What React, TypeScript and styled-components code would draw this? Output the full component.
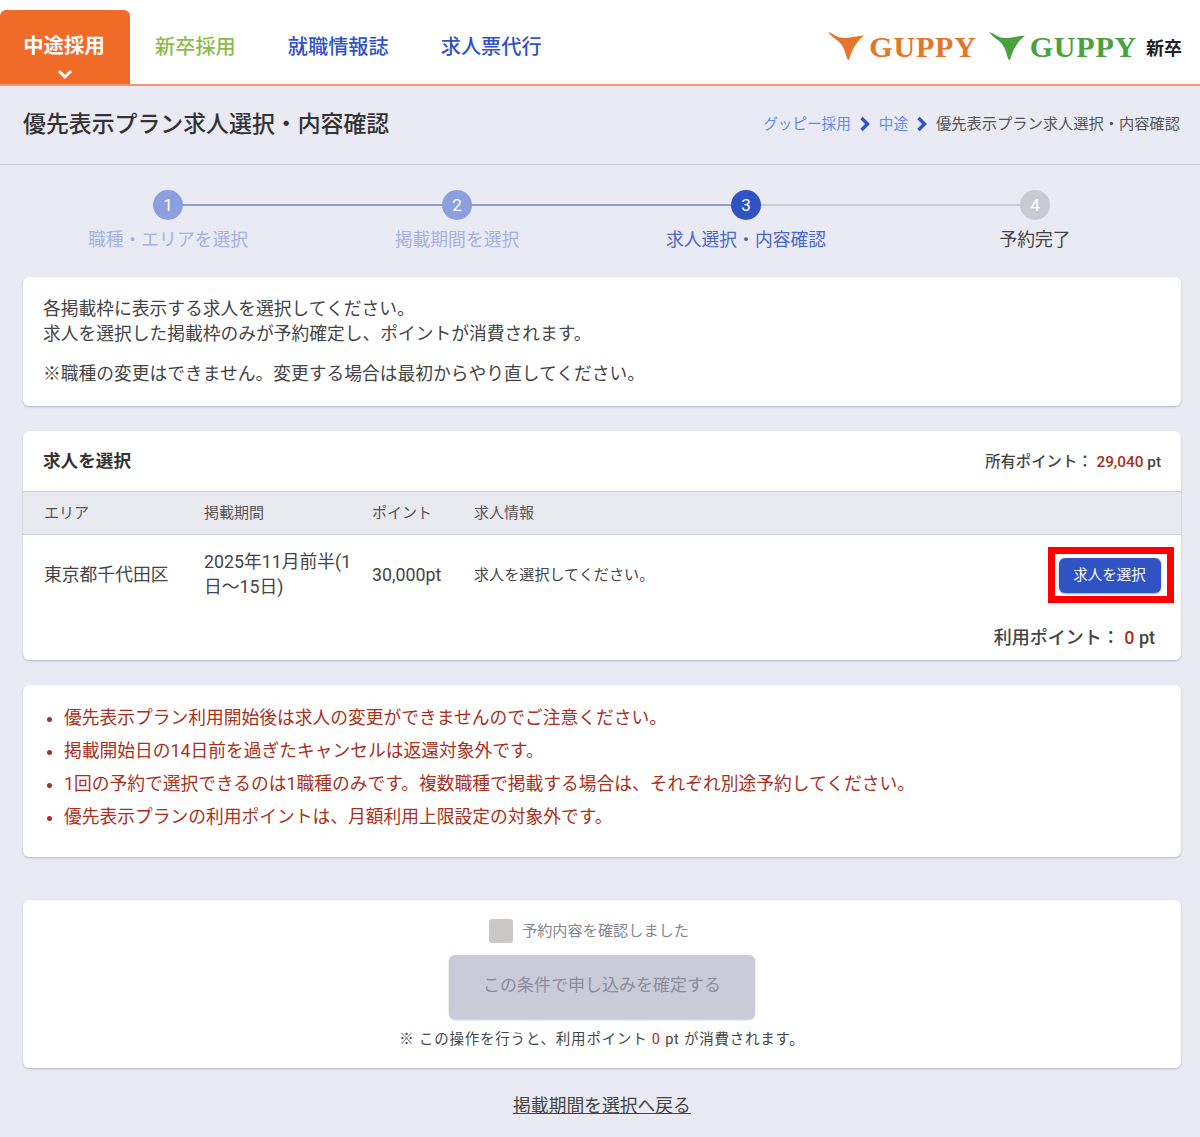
import React from 'react'
import styled, { createGlobalStyle } from 'styled-components'

const GlobalStyle = createGlobalStyle`
  html, body {
    margin: 0;
    padding: 0;
    background: #e9eaf3;
    color: #333;
    font-family: Roboto, "Noto Sans CJK JP", sans-serif;
  }
  * {
    box-sizing: border-box;
  }
`

const colors = {
  orange: '#f06a28',
  green: '#8bbb4c',
  blue: '#3053c4',
  red: '#a8301c',
  faded: '#8c9fdf'
}

const Header = styled.header`
  display: flex;
  align-items: flex-end;
  justify-content: space-between;
  height: 86px;
  background: #fff;
  border-bottom: 2px solid #f49470;
`

const Tabs = styled.nav`
  display: flex;
  align-items: flex-end;
  height: 74px;
`

const Tab = styled.a<{ $color: string }>`
  display: block;
  align-self: center;
  margin-right: 52px;
  font-size: 20.2px;
  font-weight: 500;
  line-height: 28px;
  color: ${p => p.$color};
`

const ActiveTab = styled.a`
  position: relative;
  display: block;
  width: 130px;
  height: 74px;
  margin-right: 25px;
  padding: 22px 2px 0 0;
  border-radius: 6px 6px 0 0;
  background: ${colors.orange};
  color: #fff;
  font-size: 20.4px;
  font-weight: 700;
  line-height: 28px;
  text-align: center;
`

const TabCaret = styled.svg`
  position: absolute;
  left: 57px;
  bottom: 4px;
  display: block;
`

const Logos = styled.div`
  display: flex;
  align-items: flex-start;
  align-self: flex-start;
  gap: 12px;
  margin: 32px 18px 0 0;
`

const Logo = styled.div`
  display: flex;
  align-items: flex-start;
  gap: 5px;
`

const LogoWord = styled.span<{ $color: string }>`
  margin-top: 1px;
  font-family: "Liberation Serif", serif;
  font-size: 30px;
  font-weight: 700;
  line-height: 28px;
  letter-spacing: 0.8px;
  color: ${p => p.$color};
`

const LogoSuffix = styled.span`
  margin: 5px 0 0 -3px;
  font-size: 18px;
  font-weight: 700;
  line-height: 24px;
  color: #222;
`

const TitleBar = styled.div`
  display: flex;
  align-items: center;
  justify-content: space-between;
  height: 79px;
  padding: 0 20px 1px 23px;
  border-bottom: 1px solid #cdced8;
`

const Title = styled.h1`
  margin: 0;
  font-size: 22.9px;
  font-weight: 500;
  line-height: 32px;
  color: #333;
`

const Breadcrumb = styled.div`
  display: flex;
  align-items: center;
  gap: 8px;
  margin-top: -2px;
  font-size: 15.25px;
  line-height: 20px;
  color: #555;
`

const Crumb = styled.a`
  font-size: 14.6px;
  color: #5f8ce8;
`

const Main = styled.main`
  padding: 0 19px 0 23px;
`

const Steps = styled.ol`
  display: grid;
  grid-template-columns: repeat(4, 289px);
  margin: 25px 0 24px 0.5px;
  padding: 0;
  list-style: none;
`

const Step = styled.li<{ $state: 'done' | 'current' | 'todo'; $last?: boolean }>`
  position: relative;
  display: flex;
  flex-direction: column;
  align-items: center;
  gap: 7px;
  font-size: 17.8px;
  line-height: 26px;
  color: ${p => (p.$state === 'done' ? '#a3b2e4' : p.$state === 'current' ? '#4a68c9' : '#444')};

  &::after {
    content: '';
    display: ${p => (p.$last ? 'none' : 'block')};
    position: absolute;
    top: 14px;
    left: 50%;
    width: 100%;
    height: 2px;
    background: ${p => (p.$state === 'done' ? colors.faded : '#c9cad3')};
  }
`

const StepDot = styled.span<{ $state: 'done' | 'current' | 'todo' }>`
  position: relative;
  z-index: 1;
  display: flex;
  align-items: center;
  justify-content: center;
  width: 30px;
  height: 30px;
  border-radius: 50%;
  background: ${p => (p.$state === 'done' ? colors.faded : p.$state === 'current' ? colors.blue : '#c9cad3')};
  color: #fff;
  font-size: 17px;
  font-weight: 400;
`

const Card = styled.section<{ $mb?: number }>`
  width: 1158px;
  margin-bottom: ${p => p.$mb ?? 25}px;
  border-radius: 6px;
  background: #fff;
  box-shadow: 0 1px 2px rgba(60, 60, 90, 0.3);
  overflow: hidden;
`

const Intro = styled.div`
  height: 129px;
  padding: 20px 20px 0;
  font-size: 17.76px;
  line-height: 25px;
  color: #444;
`

const IntroNote = styled.p`
  margin: 15px 0 0;
`

const CardHead = styled.div`
  display: flex;
  align-items: center;
  justify-content: space-between;
  height: 61px;
  padding: 0 20px 2px 20px;
  border-bottom: 1px solid #cdced8;
`

const CardTitle = styled.h2`
  margin: -2px 0 0;
  font-size: 17.6px;
  font-weight: 700;
  color: #333;
`

const Points = styled.div`
  font-size: 15.35px;
  font-weight: 500;
  color: #444;
`

const Red = styled.span`
  color: ${colors.red};
`

const rowColumns = '160px 168px 102px 1fr 133px'

const TableHead = styled.div`
  display: grid;
  grid-template-columns: ${rowColumns};
  align-items: center;
  height: 43px;
  padding: 0 0 3px 21px;
  background: #e9eaf0;
  border-bottom: 1px solid #cdced8;
  font-size: 15px;
  color: #555;
`

const TableRow = styled.div`
  display: grid;
  grid-template-columns: ${rowColumns};
  align-items: center;
  height: 80px;
  padding: 0 0 2px 21px;
  font-size: 17.8px;
  line-height: 25px;
  color: #444;
`

const RowHint = styled.span`
  margin-top: 2px;
  font-size: 15.1px;
  color: #444;
`

const Highlight = styled.div`
  display: flex;
  align-items: center;
  justify-content: center;
  width: 126px;
  height: 56px;
  margin-top: 2px;
  border: 7px solid #f00;
`

const SelectButton = styled.button`
  width: 102px;
  height: 35px;
  margin-right: 2px;
  padding: 0 1px 3px 0;
  border: 0;
  border-radius: 6px;
  background: ${colors.blue};
  box-shadow: 0 1px 2px rgba(30, 40, 90, 0.4);
  color: #fff;
  font-family: inherit;
  font-size: 14.5px;
  font-weight: 400;
`

const RowFoot = styled.div`
  height: 45px;
  padding: 9px 26px 0 0;
  font-size: 18px;
  font-weight: 500;
  line-height: 28px;
  color: #444;
  text-align: right;
`

const Notices = styled.ul`
  height: 172px;
  margin: 0;
  padding: 17px 20px 0 41px;
  font-size: 17.75px;
  line-height: 33px;
  color: ${colors.red};
`

const Confirm = styled.div`
  display: flex;
  flex-direction: column;
  align-items: center;
  height: 168px;
  padding-top: 19px;
`

const CheckLabel = styled.label`
  display: flex;
  align-items: center;
  gap: 9px;
  height: 24px;
  margin-right: 26px;
  font-size: 15.2px;
  line-height: 24px;
  color: #85858f;
`

const CheckBox = styled.span`
  display: block;
  width: 24px;
  height: 24px;
  border-radius: 3px;
  background: #cbc9c8;
`

const SubmitButton = styled.button`
  width: 306px;
  height: 64px;
  margin-top: 12px;
  padding: 0 0 7px;
  border: 0;
  border-radius: 6px;
  background: #cacad8;
  box-shadow: 0 1px 2px rgba(60, 60, 90, 0.3);
  color: #8c8c9f;
  font-family: inherit;
  font-size: 17px;
  font-weight: 400;
`

const ConfirmNote = styled.p`
  margin: 11px 0 0;
  font-size: 14.5px;
  line-height: 20px;
  letter-spacing: 0.77px;
  color: #444;
`

const BackLink = styled.a`
  display: block;
  margin: 0 0 17px;
  padding-top: 25px;
  font-size: 17.8px;
  line-height: 26px;
  color: #444;
  text-align: center;
  text-decoration: underline;
`

const Fish = ({ color }: { color: string }) => (
  <svg width="36" height="28" viewBox="0 0 36 28">
    <path
      d="M0 0 C4 1 7 4 12 5.5 C20 7 28 4 36 3.5 C29 9 24 17 21 28 C19.5 28 19 27 18.5 25 C17 18 14 12 10 9 C7 7 3 4 0 0 Z"
      fill={color}
    />
  </svg>
)

const Chevron = () => (
  <svg width="12" height="16" viewBox="0 0 12 16">
    <path d="M2.5 2 L8.5 8 L2.5 14" fill="none" stroke="#2f55c8" strokeWidth="3.4" />
  </svg>
)

type StepState = 'done' | 'current' | 'todo'

const stepList: { label: string; state: StepState }[] = [
  { label: '職種・エリアを選択', state: 'done' },
  { label: '掲載期間を選択', state: 'done' },
  { label: '求人選択・内容確認', state: 'current' },
  { label: '予約完了', state: 'todo' }
]

const notices = [
  '優先表示プラン利用開始後は求人の変更ができませんのでご注意ください。',
  '掲載開始日の14日前を過ぎたキャンセルは返還対象外です。',
  '1回の予約で選択できるのは1職種のみです。複数職種で掲載する場合は、それぞれ別途予約してください。',
  '優先表示プランの利用ポイントは、月額利用上限設定の対象外です。'
]

const App = () => (
  <>
    <GlobalStyle />
    <Header>
      <Tabs>
        <ActiveTab>
          中途採用
          <TabCaret width="16" height="11" viewBox="0 0 16 11">
            <path d="M2 2 L8 8 L14 2" fill="none" stroke="#fff" strokeWidth="3" />
          </TabCaret>
        </ActiveTab>
        <Tab $color={colors.green}>新卒採用</Tab>
        <Tab $color={colors.blue}>就職情報誌</Tab>
        <Tab $color={colors.blue}>求人票代行</Tab>
      </Tabs>
      <Logos>
        <Logo>
          <Fish color="#e2762a" />
          <LogoWord $color="#e2762a">GUPPY</LogoWord>
        </Logo>
        <Logo>
          <Fish color="#48a23f" />
          <LogoWord $color="#48a23f">GUPPY</LogoWord>
        </Logo>
        <LogoSuffix>新卒</LogoSuffix>
      </Logos>
    </Header>
    <TitleBar>
      <Title>優先表示プラン求人選択・内容確認</Title>
      <Breadcrumb>
        <Crumb>グッピー採用</Crumb>
        <Chevron />
        <Crumb>中途</Crumb>
        <Chevron />
        <span>優先表示プラン求人選択・内容確認</span>
      </Breadcrumb>
    </TitleBar>
    <Main>
      <Steps>
        {stepList.map((step, i) => (
          <Step key={step.label} $state={step.state} $last={i === stepList.length - 1}>
            <StepDot $state={step.state}>{i + 1}</StepDot>
            {step.label}
          </Step>
        ))}
      </Steps>
      <Card>
        <Intro>
          各掲載枠に表示する求人を選択してください。
          <br />
          求人を選択した掲載枠のみが予約確定し、ポイントが消費されます。
          <IntroNote>※職種の変更はできません。変更する場合は最初からやり直してください。</IntroNote>
        </Intro>
      </Card>
      <Card>
        <CardHead>
          <CardTitle>求人を選択</CardTitle>
          <Points>
            所有ポイント： <Red>29,040</Red> pt
          </Points>
        </CardHead>
        <TableHead>
          <span>エリア</span>
          <span>掲載期間</span>
          <span>ポイント</span>
          <span>求人情報</span>
        </TableHead>
        <TableRow>
          <span>東京都千代田区</span>
          <span>2025年11月前半(1日〜15日)</span>
          <span>30,000pt</span>
          <RowHint>求人を選択してください。</RowHint>
          <Highlight>
            <SelectButton>求人を選択</SelectButton>
          </Highlight>
        </TableRow>
        <RowFoot>
          利用ポイント： <Red>0</Red> pt
        </RowFoot>
      </Card>
      <Card $mb={43}>
        <Notices>
          {notices.map(text => (
            <li key={text}>{text}</li>
          ))}
        </Notices>
      </Card>
      <Card $mb={0}>
        <Confirm>
          <CheckLabel>
            <CheckBox />
            予約内容を確認しました
          </CheckLabel>
          <SubmitButton disabled>この条件で申し込みを確定する</SubmitButton>
          <ConfirmNote>
            ※ この操作を行うと、利用ポイント <Red>0</Red> pt が消費されます。
          </ConfirmNote>
        </Confirm>
      </Card>
      <BackLink>掲載期間を選択へ戻る</BackLink>
    </Main>
  </>
)

export default App
